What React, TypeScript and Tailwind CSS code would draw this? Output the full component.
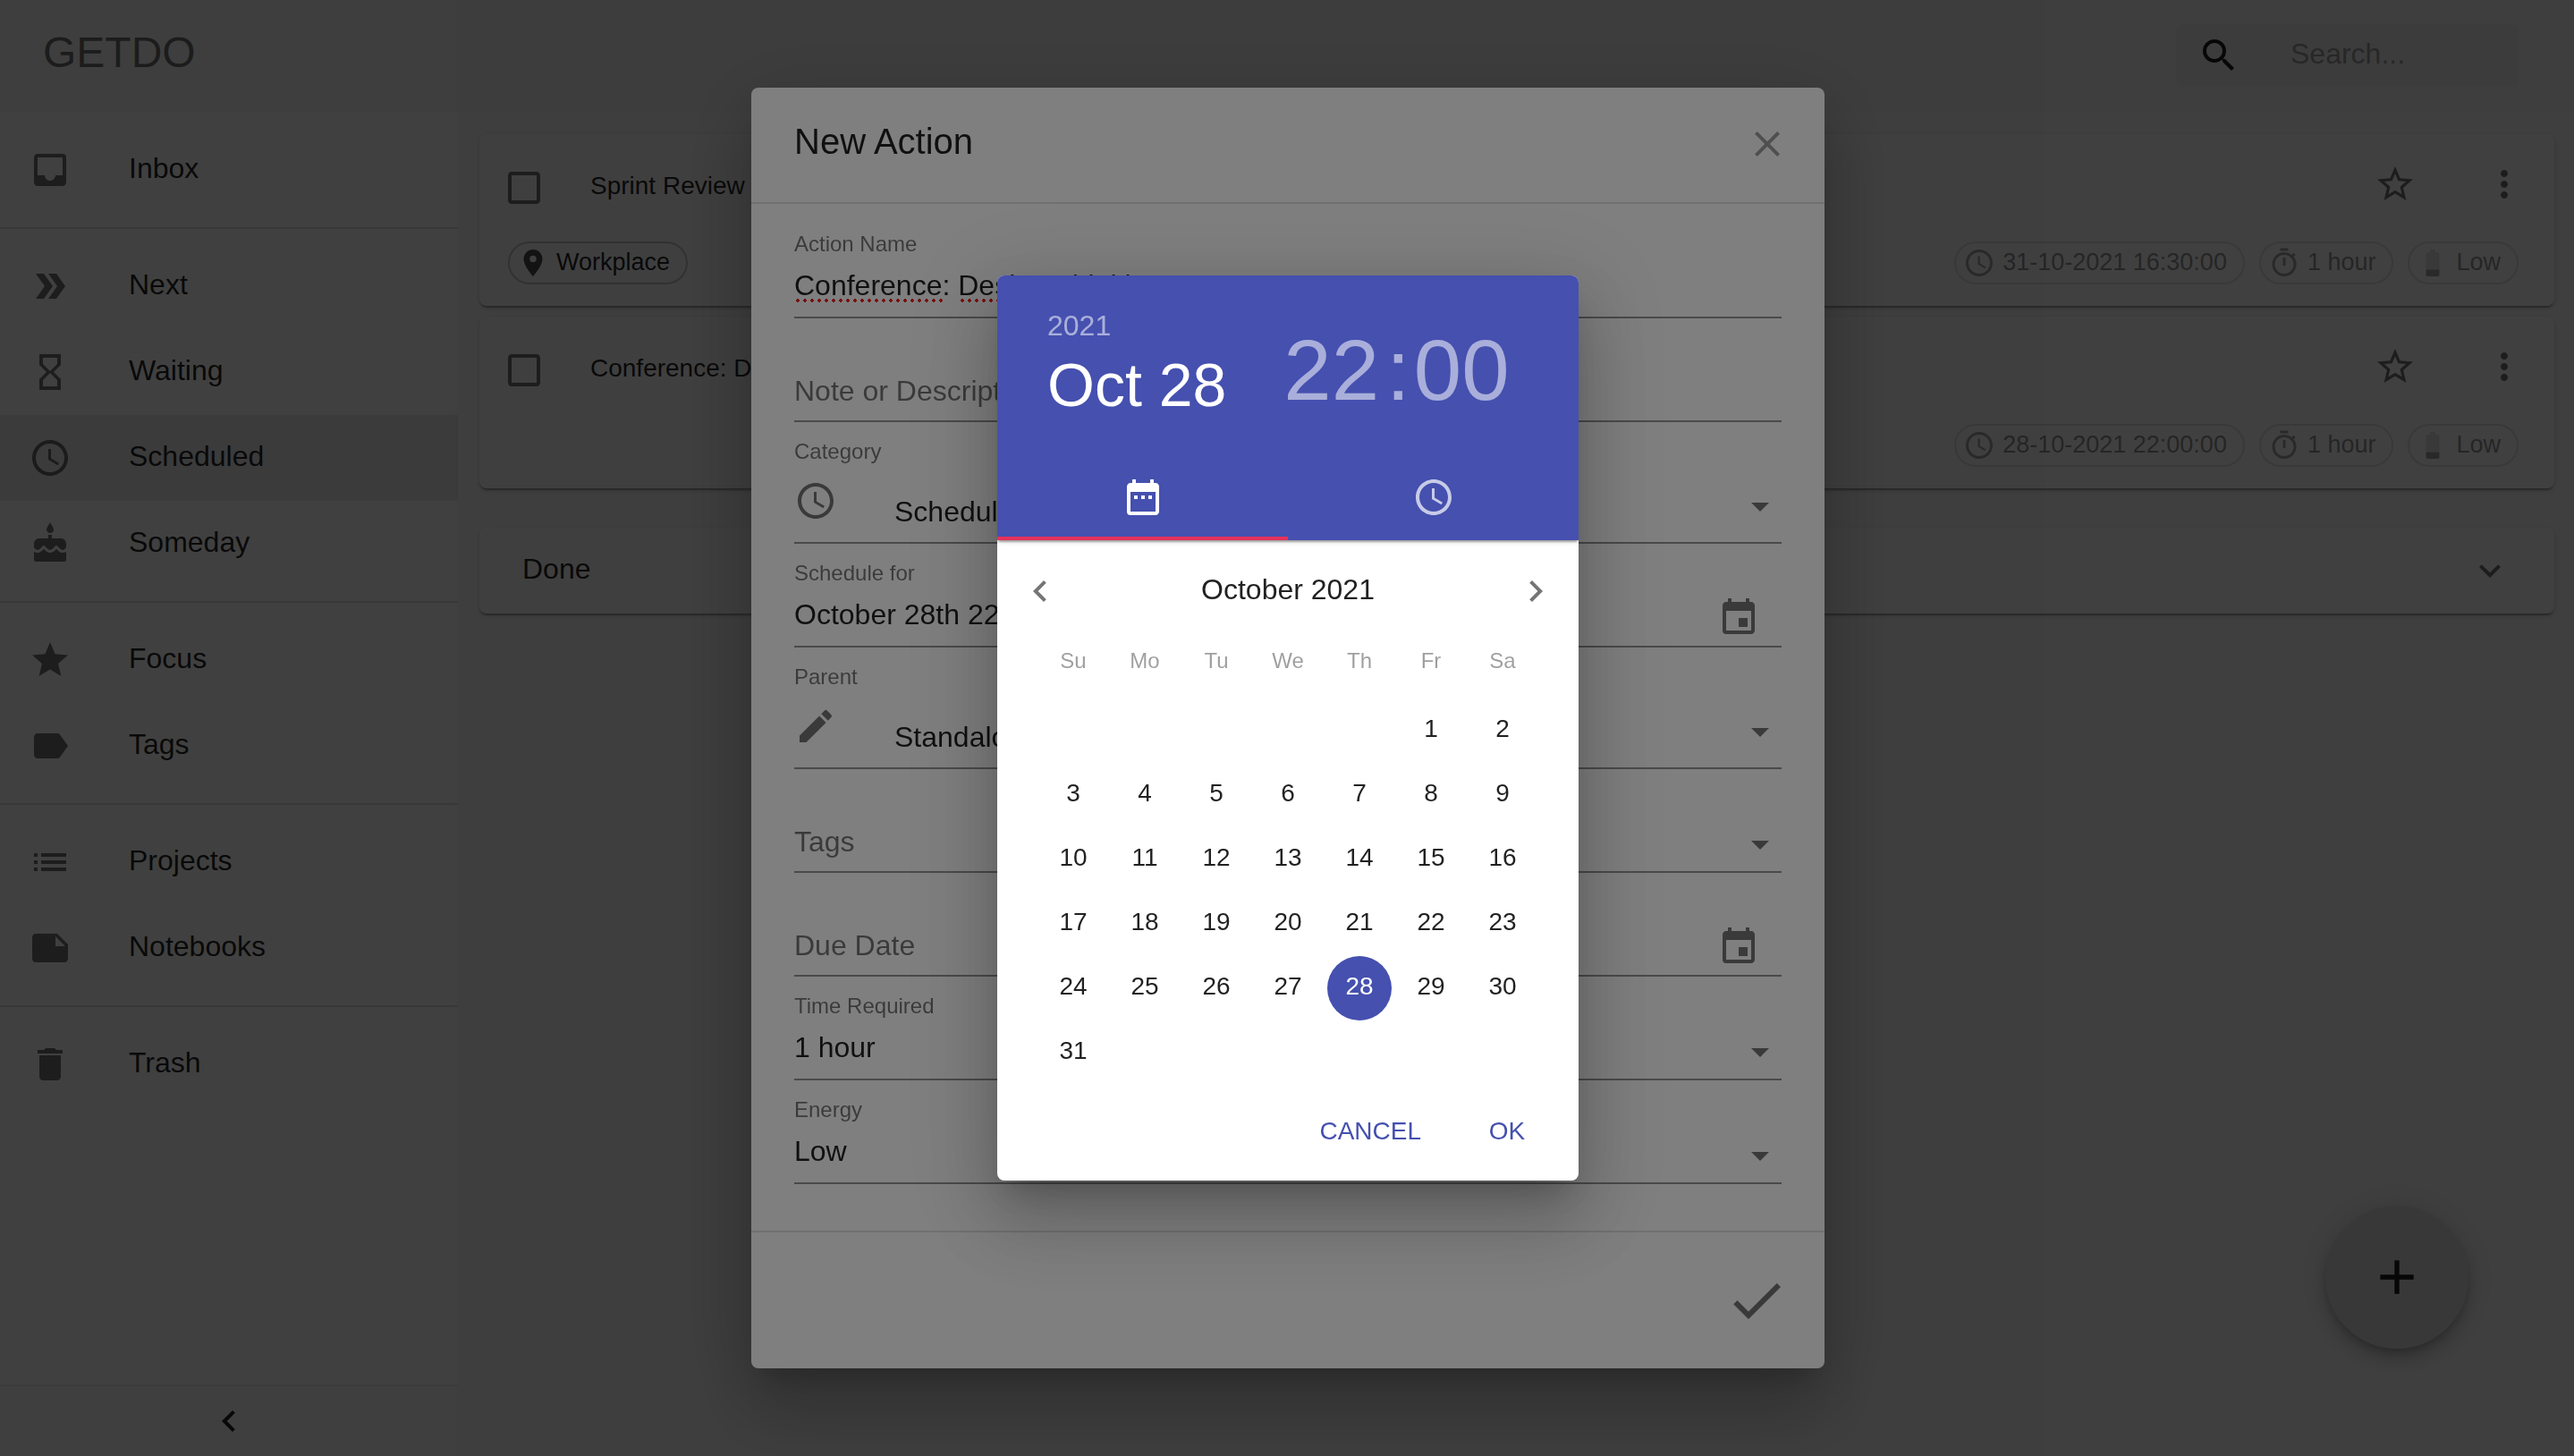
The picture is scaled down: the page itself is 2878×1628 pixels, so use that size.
import React from "react";
import {
  MdAdd,
  MdArrowDropDown,
  MdBattery20,
  MdCake,
  MdCheck,
  MdCheckBoxOutlineBlank,
  MdChevronLeft,
  MdChevronRight,
  MdClose,
  MdDateRange,
  MdDelete,
  MdDoubleArrow,
  MdEdit,
  MdEvent,
  MdExpandMore,
  MdHourglassEmpty,
  MdInbox,
  MdLabel,
  MdList,
  MdMoreVert,
  MdNote,
  MdOutlineTimer,
  MdPlace,
  MdSchedule,
  MdSearch,
  MdStar,
  MdStarBorder,
} from "react-icons/md";
import type { IconType } from "react-icons";

const navGroups: { label: string; icon: IconType }[][] = [
  [{ label: "Inbox", icon: MdInbox }],
  [
    { label: "Next", icon: MdDoubleArrow },
    { label: "Waiting", icon: MdHourglassEmpty },
    { label: "Scheduled", icon: MdSchedule },
    { label: "Someday", icon: MdCake },
  ],
  [
    { label: "Focus", icon: MdStar },
    { label: "Tags", icon: MdLabel },
  ],
  [
    { label: "Projects", icon: MdList },
    { label: "Notebooks", icon: MdNote },
  ],
  [{ label: "Trash", icon: MdDelete }],
];

const actions = [
  { title: "Sprint Review", place: "Workplace", when: "31-10-2021 16:30:00", time: "1 hour", energy: "Low" },
  { title: "Conference: Design Thinking", place: null, when: "28-10-2021 22:00:00", time: "1 hour", energy: "Low" },
];

const cardShadow =
  "shadow-[0_4px_2px_-2px_rgba(0,0,0,0.2),0_2px_2px_0_rgba(0,0,0,0.14),0_2px_6px_0_rgba(0,0,0,0.12)]";
const dialogShadow =
  "shadow-[0_22px_30px_-14px_rgba(0,0,0,0.2),0_48px_76px_6px_rgba(0,0,0,0.14),0_18px_92px_16px_rgba(0,0,0,0.12)]";

function Header() {
  return (
    <header className="flex h-[126px] shrink-0 items-center justify-between bg-[#f5f5f5] pr-[62px] pb-0.5 pl-12">
      <h1 className="pb-1.5 text-5xl text-black/54">GETDO</h1>
      <label className="flex h-[70px] w-[383px] items-center gap-14 rounded-lg bg-black/3 pl-6">
        <MdSearch className="size-12 shrink-0 text-black/87" aria-hidden />
        <input
          type="search"
          placeholder="Search..."
          aria-label="Search"
          className="h-full w-full min-w-0 bg-transparent pb-1 text-[32px] outline-none placeholder:text-black/37"
        />
      </label>
    </header>
  );
}

function Sidebar() {
  return (
    <nav className="flex w-[512px] shrink-0 flex-col bg-white">
      <div className="grow">
        {navGroups.map((group, i) => (
          <ul key={i} className={i > 0 ? "border-t-2 border-black/12 py-4" : "py-4"}>
            {group.map(({ label, icon: Icon }) => (
              <li key={label}>
                <a
                  href={"#" + label.toLowerCase()}
                  className={
                    "flex h-24 items-center gap-16 px-8 " + (label === "Scheduled" ? "bg-black/8" : "")
                  }
                >
                  <Icon className="size-12 text-black/54" aria-hidden />
                  <span className="pb-1 text-[32px] leading-12 text-black/87">{label}</span>
                </a>
              </li>
            ))}
          </ul>
        ))}
      </div>
      <button
        type="button"
        aria-label="Collapse menu"
        className="flex h-20 items-center justify-center border-t-2 border-black/5 bg-[#fafafa] text-black/87"
      >
        <MdChevronLeft className="size-12" />
      </button>
    </nav>
  );
}

function Chip({ icon: Icon, text, disabled }: { icon: IconType; text: string; disabled?: boolean }) {
  return (
    <span
      className={
        "flex h-12 items-center gap-2 rounded-full border-2 border-black/23 pr-[18px] pl-2 " +
        (disabled ? "opacity-50" : "")
      }
    >
      <Icon className="size-9 text-black/70" aria-hidden />
      <span className="pb-0.5 text-[27px] leading-9 text-black/87">{text}</span>
    </span>
  );
}

function ActionCard({ action }: { action: (typeof actions)[number] }) {
  return (
    <article className={"flex h-48 flex-col justify-between rounded-lg bg-white pt-7 pr-10 pb-6 pl-8 " + cardShadow}>
      <div className="flex h-14 items-center">
        <label className="flex grow items-center text-[28px] leading-10 text-black/87">
          <input type="checkbox" className="peer sr-only" />
          <MdCheckBoxOutlineBlank className="mt-2 mr-[50px] -ml-1.5 size-12 text-black/54" aria-hidden />
          <span className="pt-1">{action.title}</span>
        </label>
        <button type="button" aria-label="Add to focus" className="mr-[74px] text-black/54">
          <MdStarBorder className="size-12" />
        </button>
        <button type="button" aria-label="More options" className="-mr-2 text-black/54">
          <MdMoreVert className="size-12" />
        </button>
      </div>
      <div className="flex items-center gap-4">
        {action.place && <Chip icon={MdPlace} text={action.place} />}
        <div className="ml-auto flex gap-4">
          <Chip icon={MdSchedule} text={action.when} disabled />
          <Chip icon={MdOutlineTimer} text={action.time} disabled />
          <Chip icon={MdBattery20} text={action.energy} disabled />
        </div>
      </div>
    </article>
  );
}

function Page() {
  return (
    <div className="flex h-screen flex-col bg-[#fafafa]">
      <Header />
      <div className="flex grow">
        <Sidebar />
        <main className="flex grow flex-col gap-3 py-6 pr-[22px] pl-6">
          {actions.map((a) => (
            <ActionCard key={a.title} action={a} />
          ))}
          <button
            type="button"
            className={
              "mt-8 flex h-24 w-full items-center justify-between rounded-lg bg-white pr-12 pl-12 text-[32px] text-black/87 " +
              cardShadow
            }
          >
            <span className="pb-1">Done</span>
            <MdExpandMore className="size-12 text-black/54" aria-hidden />
          </button>
        </main>
      </div>
      <button
        type="button"
        aria-label="Add action"
        className="fixed right-[118px] bottom-[120px] flex size-40 items-center justify-center rounded-full bg-[#e0e0e0] text-black/87 shadow-[0_6px_10px_-2px_rgba(0,0,0,0.2),0_12px_20px_0_rgba(0,0,0,0.14),0_2px_36px_0_rgba(0,0,0,0.12)]"
      >
        <MdAdd className="size-16" />
      </button>
    </div>
  );
}

const labelClass = "block h-7 text-2xl leading-[26px] text-black/54";
const rowClass = "relative h-[116px] border-b-2 border-black/42 pt-5";
const fieldClass = "h-[66px] w-full appearance-none bg-transparent text-[32px] outline-none placeholder:text-black/54";

function fieldTone(value?: string) {
  return value ? " pb-1 text-black/87" : " text-black/54";
}

function TextRow({ id, label, value, misspelled }: { id: string; label: string; value?: string; misspelled?: boolean }) {
  return (
    <div className={rowClass}>
      <label htmlFor={id} className={labelClass}>
        {value ? label : <span className="sr-only">{label}</span>}
      </label>
      <input
        id={id}
        defaultValue={value}
        placeholder={label}
        spellCheck={false}
        className={fieldClass + fieldTone(value)}
      />
      {misspelled && (
        <div aria-hidden className="pointer-events-none absolute bottom-4 left-0 flex gap-[18px]">
          <span className="h-1 w-[166px] bg-[radial-gradient(circle,#f01c1c_2px,transparent_2px)] bg-size-[8px_4px]" />
          <span className="h-1 w-[98px] bg-[radial-gradient(circle,#f01c1c_2px,transparent_2px)] bg-size-[8px_4px]" />
        </div>
      )}
    </div>
  );
}

function DateRow({ id, label, value }: { id: string; label: string; value?: string }) {
  return (
    <div className={rowClass}>
      <label htmlFor={id} className={labelClass}>
        {value ? label : <span className="sr-only">{label}</span>}
      </label>
      <div className="flex items-center pr-6">
        <input id={id} defaultValue={value} placeholder={label} className={fieldClass + fieldTone(value)} />
        <button type="button" aria-label={"Pick " + label} className="pt-1 text-black/54">
          <MdEvent className="size-12" />
        </button>
      </div>
    </div>
  );
}

function SelectRow({ id, label, value }: { id: string; label: string; value?: string }) {
  return (
    <div className={rowClass}>
      <label htmlFor={id} className={labelClass}>
        {value ? label : <span className="sr-only">{label}</span>}
      </label>
      <select id={id} className={fieldClass + fieldTone(value)}>
        <option>{value ?? label}</option>
      </select>
      <MdArrowDropDown className="pointer-events-none absolute right-0 bottom-1.5 size-12 text-black/54" aria-hidden />
    </div>
  );
}

function IconSelectRow({ id, label, value, icon: Icon }: { id: string; label: string; value: string; icon: IconType }) {
  return (
    <div className="relative h-[136px] border-b-2 border-black/42 pt-5">
      <label htmlFor={id} className={labelClass}>
        {label}
      </label>
      <div className="flex h-[86px] items-end gap-16">
        <Icon className="mb-[22px] size-12 shrink-0 text-black/54" aria-hidden />
        <select
          id={id}
          className="mb-2.5 h-12 w-full appearance-none bg-transparent text-[32px] leading-12 text-black/87 outline-none"
        >
          <option>{value}</option>
        </select>
      </div>
      <MdArrowDropDown className="pointer-events-none absolute right-0 bottom-4 size-12 text-black/54" aria-hidden />
    </div>
  );
}

function NewActionDialog() {
  return (
    <div className="fixed inset-0 flex items-center justify-center bg-black/50 pl-0.5">
      <section
        role="dialog"
        aria-labelledby="new-action-title"
        className={"w-[1200px] max-w-full rounded-lg bg-white " + dialogShadow}
      >
        <div className="flex h-[130px] items-center justify-between border-b-2 border-black/12 pr-10 pb-0.5 pl-12">
          <h2 id="new-action-title" className="pb-1.5 text-[40px] leading-14 text-black/87">
            New Action
          </h2>
          <button type="button" aria-label="Close" className="text-[#9e9e9e]">
            <MdClose className="size-12" />
          </button>
        </div>
        <form className="px-12 pt-3 pb-[52px]">
          <TextRow id="name" label="Action Name" value="Conference: Design Thinking" misspelled />
          <TextRow id="note" label="Note or Description" />
          <IconSelectRow id="category" label="Category" value="Scheduled" icon={MdSchedule} />
          <DateRow id="schedule" label="Schedule for" value="October 28th 22:00" />
          <IconSelectRow id="parent" label="Parent" value="Standalone" icon={MdEdit} />
          <SelectRow id="tags" label="Tags" />
          <DateRow id="due" label="Due Date" />
          <SelectRow id="time" label="Time Required" value="1 hour" />
          <SelectRow id="energy" label="Energy" value="Low" />
        </form>
        <div className="flex h-[154px] items-center justify-end border-t-2 border-black/12 pr-10">
          <button type="button" aria-label="Save action" className="text-black/54">
            <MdCheck className="size-18" />
          </button>
        </div>
      </section>
    </div>
  );
}

const weekdays = ["Su", "Mo", "Tu", "We", "Th", "Fr", "Sa"];
const weeks = Array.from({ length: 6 }, (_, w) =>
  Array.from({ length: 7 }, (_, d) => {
    const day = w * 7 + d - 4;
    return day >= 1 && day <= 31 ? day : null;
  }),
);

function DateTimePicker() {
  return (
    <div className="fixed inset-0 flex items-center justify-center bg-black/50 pl-0.5">
      <section
        role="dialog"
        aria-label="Choose date and time"
        className={"w-[650px] overflow-hidden rounded-lg bg-white " + dialogShadow}
      >
        <div className={"relative bg-[#4550af] text-white " + cardShadow}>
          <div className="flex h-[200px] items-start gap-16 pt-[30px] pl-14">
            <div className="flex flex-col items-start">
              <button type="button" className="text-[32px] leading-[52px] text-white/54">
                2021
              </button>
              <button type="button" className="text-[68px] leading-20">
                Oct 28
              </button>
            </div>
            <div className="flex pt-[22px] text-8xl leading-[108px] text-white/54">
              <button type="button">22</button>
              <span className="mr-1 ml-2">:</span>
              <button type="button">00</button>
            </div>
          </div>
          <div role="tablist" className="grid h-24 grid-cols-2">
            <button
              type="button"
              role="tab"
              aria-selected="true"
              aria-label="Date"
              className="flex items-center justify-center border-y-4 border-t-transparent border-b-[#e5315b]"
            >
              <MdDateRange className="size-12" />
            </button>
            <button
              type="button"
              role="tab"
              aria-selected="false"
              aria-label="Time"
              className="flex items-center justify-center text-white/70"
            >
              <MdSchedule className="size-12" />
            </button>
          </div>
        </div>
        <div className="flex h-[114px] items-center justify-between px-6 text-[#757575]">
          <button type="button" aria-label="Previous month">
            <MdChevronLeft className="size-12" />
          </button>
          <span className="pb-1 text-[32px] text-black/87">October 2021</span>
          <button type="button" aria-label="Next month">
            <MdChevronRight className="size-12" />
          </button>
        </div>
        <table className="mx-auto table-fixed border-collapse">
          <thead>
            <tr>
              {weekdays.map((d) => (
                <th key={d} scope="col" className="h-[63px] w-20 pb-[22px] text-2xl leading-8 font-normal text-black/38">
                  {d}
                </th>
              ))}
            </tr>
          </thead>
          <tbody>
            {weeks.map((week, w) => (
              <tr key={w}>
                {week.map((day, d) => (
                  <td key={d} className="h-18 w-20 p-0 text-center">
                    {day && (
                      <button
                        type="button"
                        className={
                          "size-18 rounded-full pb-1 text-[28px] leading-10 " +
                          (day === 28 ? "bg-[#4550af] text-white" : "text-black/87")
                        }
                      >
                        {day}
                      </button>
                    )}
                  </td>
                ))}
              </tr>
            ))}
          </tbody>
        </table>
        <div className="flex h-[107px] items-center justify-end gap-4 px-4 text-[28px] text-[#4550af]">
          <button type="button" className="h-18 px-4 pb-1">
            CANCEL
          </button>
          <button type="button" className="h-18 w-32 pb-1">
            OK
          </button>
        </div>
      </section>
    </div>
  );
}

export default function App() {
  return (
    <div className="font-['Liberation_Sans',sans-serif]">
      <Page />
      <NewActionDialog />
      <DateTimePicker />
    </div>
  );
}
